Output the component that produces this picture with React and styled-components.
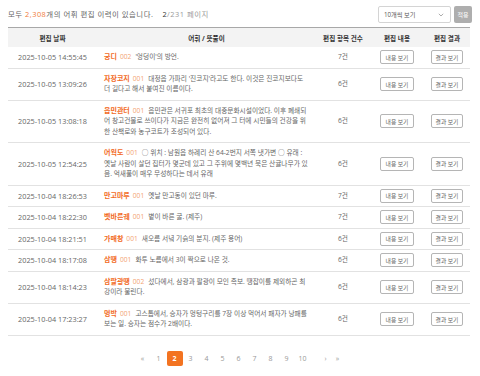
import React from "react";
import styled, { createGlobalStyle } from "styled-components";

const GlobalStyle = createGlobalStyle`
  body {
    margin: 0;
    background: #fff;
    font-family: "Open Sans", "Noto Sans CJK KR", sans-serif;
    color: #555;
  }
`;

const Page = styled.div`
  width: 480px;
  padding: 0 10px 0 8px;
  box-sizing: border-box;
`;

const Toolbar = styled.div`
  display: flex;
  align-items: center;
  height: 27px;
`;

const Summary = styled.div`
  flex: 1;
  color: #666;
  font-size: 7.4px;
  letter-spacing: 0.5px;
  & b {
    font-weight: 400;
    color: #f07a3a;
  }
`;

const PageInfo = styled.span`
  margin-left: 9px;
  color: #999;
  & strong {
    font-weight: 400;
    color: #333;
  }
`;

const Select = styled.div`
  width: 73px;
  height: 17px;
  box-sizing: border-box;
  border: 1px solid #d4d4d4;
  border-radius: 2px;
  display: flex;
  align-items: center;
  justify-content: space-between;
  padding: 0 6px 0 5px;
  color: #555;
  font-size: 6.2px;
  margin-top: 2px;
`;

const ApplyButton = styled.button`
  width: 18px;
  height: 17px;
  margin-left: 3px;
  margin-right: -2px;
  margin-top: 2px;
  border: 0;
  border-radius: 2px;
  background: #aeaeae;
  color: #fff;
  font-family: inherit;
  font-size: 6px;
  padding: 0;
`;

const Row = styled.div`
  display: grid;
  grid-template-columns: 89px 219px 54px 54px 46px;
  align-items: center;
  border-bottom: 1px solid #e2e2e2;
`;

const HeadRow = styled(Row)`
  height: 20px;
  background: #f3f3f3;
  border-top: 1px solid #a8a8a8;
  border-bottom: 0;
  box-sizing: border-box;
  font-size: 6.6px;
  font-weight: 700;
  color: #333;
`;

const Cell = styled.div`
  text-align: ${(p) => (p.left ? "left" : "center")};
  padding: ${(p) => (p.left ? "5px 6px 5px 7px" : "5px 0")};
  line-height: 10.5px;
  font-size: ${(p) => (p.date ? "7.3px" : "6.7px")};
  color: #666;
`;

const ButtonCell = styled.div`
  display: flex;
  justify-content: center;
  align-items: center;
`;

const HeadCell = styled.div`
  text-align: center;
`;

const Word = styled.span`
  color: #f26a24;
  font-weight: 700;
  font-size: 7px;
`;

const Num = styled.span`
  color: #f3a373;
  margin: 0 4px 0 3px;
`;

const SmallButton = styled.button`
  width: ${(p) => p.w}px;
  height: 14px;
  box-sizing: border-box;
  border: 1px solid #b5b5b5;
  border-radius: 2px;
  background: #fff;
  color: #666;
  font-family: inherit;
  font-size: 5.8px;
  padding: 0;
`;

const Pager = styled.div`
  display: flex;
  justify-content: center;
  align-items: center;
  margin-top: 15px;
  font-size: 7px;
  color: #999;
`;

const PageItem = styled.span`
  width: ${(p) => (p.arrow ? 12 : 16)}px;
  height: 15px;
  line-height: 15px;
  text-align: center;
  margin-left: ${(p) => p.gap || 0}px;
  border-radius: 2px;
  background: ${(p) => (p.active ? "#f37321" : "transparent")};
  color: ${(p) => (p.active ? "#fff" : "#999")};
  font-weight: ${(p) => (p.active ? 700 : 400)};
`;

const rows = [
  ["2025-10-05 14:55:45", "궁디", "002", "'엉덩이'의 방언.", "7건"],
  ["2025-10-05 13:09:26", "자장코지", "001", "대정읍 가파리 '진코지'라고도 한다. 이것은 진코지보다도 더 길다고 해서 붙여진 이름이다.", "6건"],
  ["2025-10-05 13:08:18", "읍민관터", "001", "읍민관은 서귀포 최초의 대중문화시설이었다. 이후 폐쇄되어 창고건물로 쓰이다가 지금은 완전히 없어져 그 터에 시민들의 건강을 위한 산책로와 농구코트가 조성되어 있다.", "6건"],
  ["2025-10-05 12:54:25", "어웍도", "001", "○ 위치 : 남원읍 하례리 산 64-2번지 서쪽 냇가변 ○ 유래 : 옛날 사람이 살던 집터가 몇군데 있고 그 주위에 몇백년 묵은 산귤나무가 있음. 억새풀이 매우 무성하다는 데서 유래", "6건"],
  ["2025-10-04 18:26:53", "만고마루", "001", "옛날 만고동이 있던 마루.", "7건"],
  ["2025-10-04 18:22:30", "벳바른궤", "001", "볕이 바른 굴. (제주)", "7건"],
  ["2025-10-04 18:21:51", "가매창", "001", "새오름 서녘 기슭의 분지. (제주 용어)", "6건"],
  ["2025-10-04 18:17:08", "삼땡", "001", "화투 노름에서 3이 짝으로 나온 것.", "6건"],
  ["2025-10-04 18:14:23", "삼팔광땡", "002", "섰다에서, 삼광과 팔광이 모인 족보. 땡잡이를 제외하곤 최강이라 불린다.", "6건"],
  ["2025-10-04 17:23:27", "멍박", "001", "고스톱에서, 승자가 멍텅구리를 7장 이상 먹어서 패자가 낭패를 보는 일. 승자는 점수가 2배이다.", "6건"],
];

const Chevron = () => (
  <svg width="6" height="4" viewBox="0 0 6 4">
    <path d="M0.8 0.8 L3 3 L5.2 0.8" fill="none" stroke="#888" strokeWidth="0.7" />
  </svg>
);

const App = () => {
  return (
    <Page>
      <GlobalStyle />
      <Toolbar>
        <Summary>
          모두 <b>2,308</b>개의 어휘 편집 이력이 있습니다.
          <PageInfo>
            <strong>2</strong>/231 페이지
          </PageInfo>
        </Summary>
        <Select>
          10개씩 보기
          <Chevron />
        </Select>
        <ApplyButton>적용</ApplyButton>
      </Toolbar>

      <HeadRow>
        <HeadCell>편집 날짜</HeadCell>
        <HeadCell>어휘 / 뜻풀이</HeadCell>
        <HeadCell>편집 항목 건수</HeadCell>
        <HeadCell>편집 내용</HeadCell>
        <HeadCell>편집 결과</HeadCell>
      </HeadRow>

      {rows.map(([date, word, num, desc, count]) => (
        <Row key={date}>
          <Cell date>{date}</Cell>
          <Cell left>
            <Word>{word}</Word>
            <Num>{num}</Num>
            {desc}
          </Cell>
          <Cell>{count}</Cell>
          <ButtonCell>
            <SmallButton w={34}>내용 보기</SmallButton>
          </ButtonCell>
          <ButtonCell>
            <SmallButton w={32}>결과 보기</SmallButton>
          </ButtonCell>
        </Row>
      ))}

      <Pager>
        <PageItem>«</PageItem>
        {[1, 2, 3, 4, 5, 6, 7, 8, 9, 10].map((n) => (
          <PageItem key={n} active={n === 2}>
            {n}
          </PageItem>
        ))}
        <PageItem arrow gap={9}>›</PageItem>
        <PageItem arrow>»</PageItem>
      </Pager>
    </Page>
  );
};

export default App;
